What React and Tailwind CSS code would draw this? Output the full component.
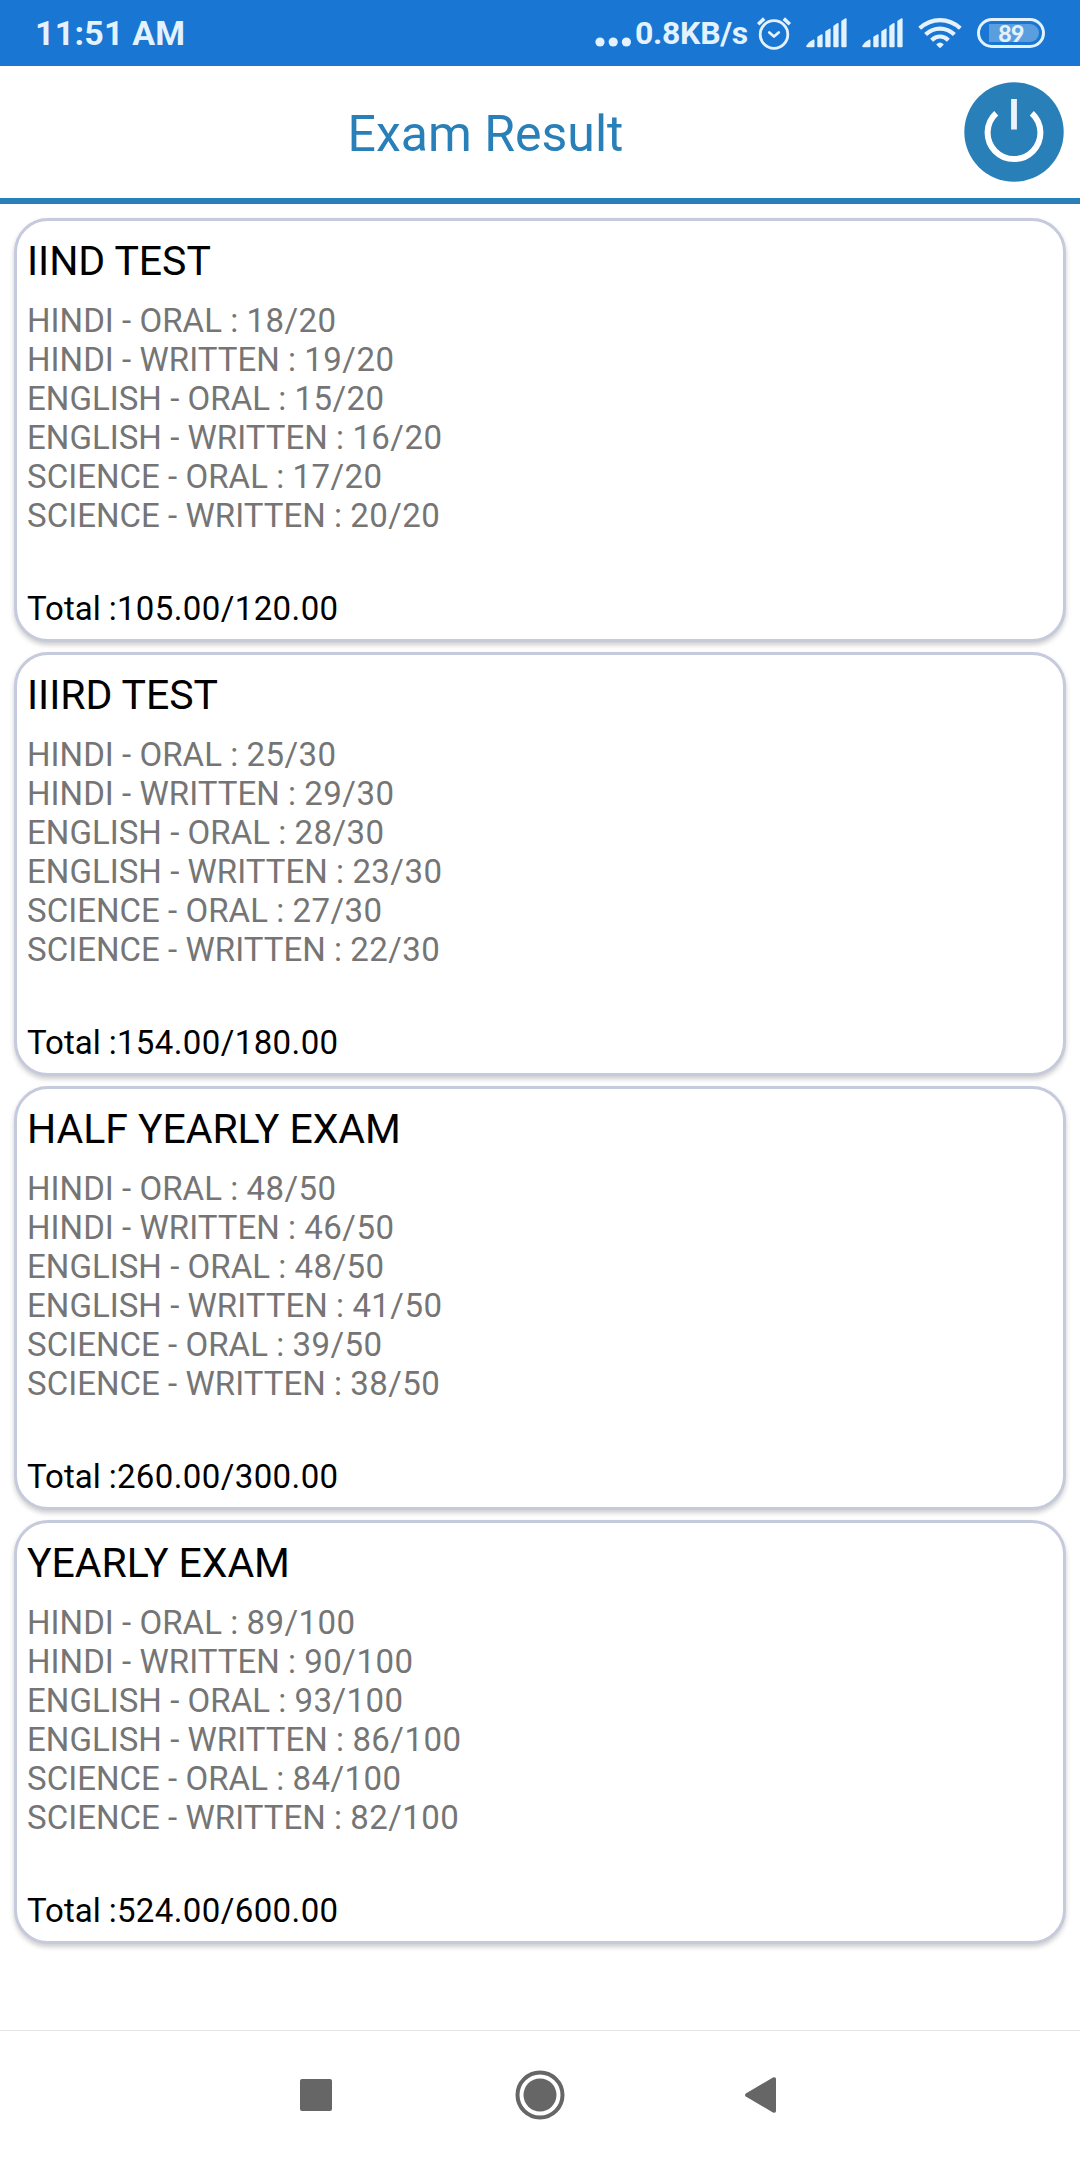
import React from 'react';

const exams = [
    {
        name: 'IIND TEST',
        max: 20,
        marks: [18, 19, 15, 16, 17, 20],
        total: '105.00/120.00',
    },
    {
        name: 'IIIRD TEST',
        max: 30,
        marks: [25, 29, 28, 23, 27, 22],
        total: '154.00/180.00',
    },
    {
        name: 'HALF YEARLY EXAM',
        max: 50,
        marks: [48, 46, 48, 41, 39, 38],
        total: '260.00/300.00',
    },
    {
        name: 'YEARLY EXAM',
        max: 100,
        marks: [89, 90, 93, 86, 84, 82],
        total: '524.00/600.00',
    },
];

const subjects = [
    'HINDI - ORAL',
    'HINDI - WRITTEN',
    'ENGLISH - ORAL',
    'ENGLISH - WRITTEN',
    'SCIENCE - ORAL',
    'SCIENCE - WRITTEN',
];

const AlarmIcon = () => (
    <svg className="ml-[7px] shrink-0" width="36" height="36" viewBox="0 0 36 36" fill="none" stroke="currentColor" strokeLinecap="round">
        <circle cx="18" cy="19.5" r="13.8" strokeWidth="2.8" />
        <path d="M13.3 17.5 L18 21.5 L22.7 17.5" strokeWidth="2.8" strokeLinejoin="round" />
        <path d="M2.2 9.2 L8.2 3.6 M33.8 9.2 L27.8 3.6" strokeWidth="3.6" strokeLinecap="butt" />
    </svg>
);

const SignalIcon = () => (
    <svg className="shrink-0" width="41" height="30" viewBox="0 0 41 30" fill="currentColor">
        <path d="M1.5 29.3 Q-0.8 28.8 0.8 27 Q4 23 7.4 21.6 Q8.5 21.4 8.5 22.6 V28.3 Q8.5 29.3 7.5 29.3 Z" />
        <path d="M11.3 18.7 L15 16.4 Q16.6 15.7 16.6 17.2 V28.3 Q16.6 29.3 15.6 29.3 H12.3 Q11.3 29.3 11.3 28.3 Z" />
        <path d="M19.3 13.3 L23 10.9 Q24.6 10 24.6 11.6 V28.3 Q24.6 29.3 23.6 29.3 H20.3 Q19.3 29.3 19.3 28.3 Z" />
        <path d="M27.3 8 L31 5.2 Q32.6 4.4 32.6 6 V28.3 Q32.6 29.3 31.6 29.3 H28.3 Q27.3 29.3 27.3 28.3 Z" />
        <path d="M35.3 3 L39 0.5 Q40.6 -0.4 40.6 1.2 V28.3 Q40.6 29.3 39.6 29.3 H36.3 Q35.3 29.3 35.3 28.3 Z" />
    </svg>
);

const WifiIcon = () => (
    <svg className="ml-[15px] shrink-0" width="44" height="32" viewBox="0 0 44 32" fill="none" stroke="currentColor" strokeWidth="4.2">
        <path d="M1.7 11.2 C13.5 0.3 30.5 0.3 42.3 11.2" />
        <path d="M7.6 17.6 C16 9.6 28 9.6 36.4 17.6" />
        <path d="M13.6 23.2 C18.7 18.4 25.3 18.4 30.4 23.2" />
        <path d="M18.2 27.4 Q22 23.6 25.8 27.4 L22.9 30.5 Q22 31.3 21.1 30.5 Z" fill="currentColor" stroke="none" />
    </svg>
);

const StatusBar = () => (
    <div className="flex h-[66px] items-center justify-between bg-[#1976d2] pl-[35px] pr-[35px] text-[#e3f2fd]">
        <span className="text-[34px] font-bold leading-[66px] tracking-[0.2px]">11:51 AM</span>
        <div className="flex items-center">
            <svg className="mt-[18px] shrink-0" width="38" height="10" viewBox="0 0 38 10" fill="currentColor">
                <circle cx="5" cy="5" r="4.6" />
                <circle cx="18.2" cy="5" r="4.6" />
                <circle cx="31.4" cy="5" r="4.6" />
            </svg>
            <span className="ml-[2px] w-[114px] text-[32px] font-bold leading-[66px] tracking-[-0.3px]">0.8KB/s</span>
            <AlarmIcon />
            <div className="ml-[14px] flex gap-[15px]">
                <SignalIcon />
                <SignalIcon />
            </div>
            <WifiIcon />
            <div className="ml-[15px] flex h-[30px] w-[68px] rounded-full border-[3px] border-current p-[3px] pl-[9px]">
                <div className="flex flex-1 items-center justify-center rounded-r-full bg-[#5b9ee0] pr-[6px] font-[Lato] text-[23px] font-black leading-none tracking-[-0.6px]">89</div>
            </div>
        </div>
    </div>
);

const Header = () => (
    <div className="flex h-[138px] items-center justify-between border-b-[6px] border-[#2980b9] pr-[16px]">
        <h1 className="flex-1 pl-[7px] pt-[3px] text-center text-[50px] leading-[60px] text-[#2980b9]">Exam Result</h1>
        <button type="button" className="size-[100px]">
            <svg width="100" height="100" viewBox="0 0 100 100" fill="none">
                <circle cx="50" cy="50" r="49.7" fill="#2980b9" />
                <path d="M32.2 31.2 A26.4 26.4 0 1 0 67.8 31.2" stroke="#fff" strokeWidth="6" />
                <path d="M50 17 V47.5" stroke="#edf3fa" strokeWidth="5.8" />
            </svg>
        </button>
    </div>
);

const ExamCard = ({ exam }) => (
    <div className="h-[424px] rounded-[34px] border-[3px] border-[#c5cadc] bg-white px-[10px] pt-[16px] shadow-[0_3px_5px_rgba(0,0,0,0.2)]">
        <h2 className="text-[41px] leading-[48px] tracking-[-0.07px] text-black">{exam.name}</h2>
        <ul className="mt-4 text-[33px] leading-[39px] tracking-[0.04px] text-[#757575]">
            {subjects.map((subject, i) => (
                <li key={subject}>
                    {`${subject} : `}
                    <span className="tracking-[0.45px]">{`${exam.marks[i]}/${exam.max}`}</span>
                </li>
            ))}
        </ul>
        <p className="mt-[54px] text-[33px] leading-[39px] text-black">
            {'Total :'}
            <span className="tracking-[0.4px]">{exam.total}</span>
        </p>
    </div>
);

const NavBar = () => (
    <div className="flex h-[130px] items-center justify-between border-t border-[#e3e3e3] pb-[1px] pl-[300px] pr-[304px] text-[#666]">
        <div className="size-8 rounded-[2px] bg-current" />
        <svg className="ml-[3px]" width="50" height="50" viewBox="0 0 50 50">
            <circle cx="25" cy="25" r="22.5" fill="none" stroke="currentColor" strokeWidth="4" />
            <circle cx="25" cy="25" r="16.5" fill="currentColor" />
        </svg>
        <svg width="31" height="36" viewBox="0 0 31 36" fill="currentColor">
            <path d="M0.8 16.6 L28 0.5 Q31 -0.4 31 2 V34 Q31 36.4 28 35.5 L0.8 19.4 Q-0.8 18 0.8 16.6 Z" />
        </svg>
    </div>
);

export default function App() {
    return (
        <div className="flex h-[2160px] w-[1080px] flex-col overflow-hidden bg-white font-[Roboto,sans-serif]">
            <StatusBar />
            <Header />
            <main className="flex flex-1 flex-col gap-[10px] px-[14px] pt-[14px]">
                {exams.map(exam => (
                    <ExamCard key={exam.name} exam={exam} />
                ))}
            </main>
            <NavBar />
        </div>
    );
}
